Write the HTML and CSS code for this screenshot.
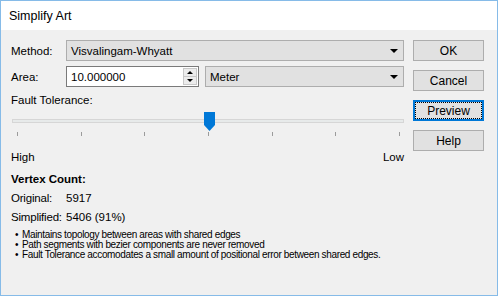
FILE: index.html
```html
<!DOCTYPE html>
<html lang="en">
<head>
    <meta charset="UTF-8">
    <title>Simplify Art</title>
    <link rel="stylesheet" href="styles.css">
</head>
<body>
    <div class="window">
        <div class="titlebar">Simplify Art</div>
        <div class="content">
            <div class="main">
                <div class="row">
                    <span class="label">Method:</span>
                    <div class="combo wide"><span>Visvalingam-Whyatt</span><i class="arrow"></i></div>
                </div>
                <div class="row">
                    <span class="label">Area:</span>
                    <div class="spinbox">
                        <span>10.000000</span>
                        <div class="spin">
                            <i class="up"></i>
                            <i class="down"></i>
                        </div>
                    </div>
                    <div class="combo unit"><span>Meter</span><i class="arrow"></i></div>
                </div>
                <div class="caption">Fault Tolerance:</div>
                <div class="slider">
                    <div class="track"></div>
                    <div class="thumb">
                        <svg width="11" height="19" viewBox="0 0 11 19"><path d="M0 0H11V13L5.5 19L0 13Z" fill="#0078d7"/></svg>
                    </div>
                </div>
                <div class="ticks">
                    <i></i><i></i><i></i><i></i><i></i><i></i><i></i>
                </div>
                <div class="ends"><span>High</span><span>Low</span></div>
                <div class="heading">Vertex Count:</div>
                <div class="stat"><span class="label">Original:</span>5917</div>
                <div class="stat"><span class="label">Simplified:</span>5406 (91%)</div>
                <ul class="notes">
                    <li>Maintains topology between areas with shared edges</li>
                    <li>Path segments with bezier components are never removed</li>
                    <li>Fault Tolerance accomodates a small amount of positional error between shared edges.</li>
                </ul>
            </div>
            <div class="buttons">
                <button class="btn">OK</button>
                <button class="btn">Cancel</button>
                <button class="btn focus">Preview</button>
                <button class="btn">Help</button>
            </div>
        </div>
    </div>
</body>
</html>
```
FILE: styles.css
```css
body {
    margin: 0;
    background-color: #f0f0f0;
    font-family: "Liberation Sans", Arial, sans-serif;
    font-size: 11.5px;
    color: #000;
}
.window {
    box-sizing: border-box;
    width: 498px;
    height: 296px;
    border: 1px solid #86bbe8;
    background-color: #f0f0f0;
}
.titlebar {
    height: 29px;
    line-height: 30px;
    padding-left: 8px;
    background-color: #fff;
    font-size: 12.5px;
}
.content {
    display: flex;
    padding: 10px 0 0 10px;
}
.main {
    width: 393px;
}
.row {
    display: flex;
    align-items: center;
    height: 21px;
    margin-bottom: 5px;
}
.row .label {
    width: 55px;
}
.combo {
    box-sizing: border-box;
    display: flex;
    align-items: center;
    justify-content: space-between;
    height: 21px;
    padding: 0 5px 0 4px;
    border: 1px solid #adadad;
    background-color: #e1e1e1;
}
.combo.wide {
    width: 338px;
}
.combo.unit {
    width: 199px;
    margin-left: 6px;
}
.arrow {
    width: 0;
    height: 0;
    border-left: 4px solid transparent;
    border-right: 4px solid transparent;
    border-top: 4px solid #000;
}
.spinbox {
    box-sizing: border-box;
    display: flex;
    align-items: center;
    justify-content: space-between;
    width: 133px;
    height: 21px;
    padding: 0 1px 0 4px;
    border: 1px solid #7a7a7a;
    background-color: #fff;
}
.spin {
    display: flex;
    flex-direction: column;
    width: 14px;
    height: 17px;
    border: 1px solid #c8c8c8;
    box-sizing: border-box;
    background-color: #ececec;
}
.spin i {
    flex: 1;
    display: flex;
    align-items: center;
    justify-content: center;
}
.spin i::after {
    content: "";
    border-left: 3px solid transparent;
    border-right: 3px solid transparent;
}
.spin .up {
    border-bottom: 1px solid #c8c8c8;
}
.spin .up::after {
    border-bottom: 3px solid #000;
}
.spin .down::after {
    border-top: 3px solid #000;
}
.caption {
    height: 16px;
    line-height: 16px;
    margin-top: 1px;
}
.slider {
    position: relative;
    height: 19px;
    margin-top: 4px;
    margin-left: 1px;
}
.track {
    box-sizing: border-box;
    position: relative;
    top: 7px;
    height: 4px;
    border: 1px solid #d6d6d6;
    background-color: #e7eaea;
}
.thumb {
    position: absolute;
    left: 192px;
    top: 0;
    height: 19px;
}
.ticks {
    display: flex;
    justify-content: space-between;
    padding: 1px 4px 0 6px;
    height: 5px;
}
.ticks i {
    width: 1px;
    height: 4px;
    background-color: #9b9b9b;
}
.ends {
    display: flex;
    justify-content: space-between;
    margin-top: 12px;
    height: 16px;
    line-height: 16px;
}
.heading {
    font-weight: bold;
    margin-top: 6px;
    height: 16px;
    line-height: 16px;
}
.stat {
    margin-top: 3px;
    height: 16px;
    line-height: 16px;
    white-space: nowrap;
}
.stat .label {
    display: inline-block;
    width: 55px;
    letter-spacing: -0.2px;
}
.notes {
    list-style: none;
    margin: 5px 0 0 0;
    padding: 0 0 0 4px;
    font-size: 10px;
    line-height: 10px;
    white-space: nowrap;
    letter-spacing: -0.35px;
}
.notes li::before {
    content: "\2022";
    display: inline-block;
    width: 7px;
}
.buttons {
    display: flex;
    flex-direction: column;
    gap: 9px;
    margin-left: 9px;
}
.btn {
    box-sizing: border-box;
    width: 71px;
    height: 21px;
    padding: 0;
    border: 1px solid #adadad;
    background-color: #e1e1e1;
    font-family: inherit;
    font-size: 12px;
    color: #000;
}
.btn.focus {
    border-color: #0078d7;
    box-shadow: inset 0 0 0 1px #0078d7;
    outline: 1px dotted #000;
    outline-offset: -3px;
}
```
